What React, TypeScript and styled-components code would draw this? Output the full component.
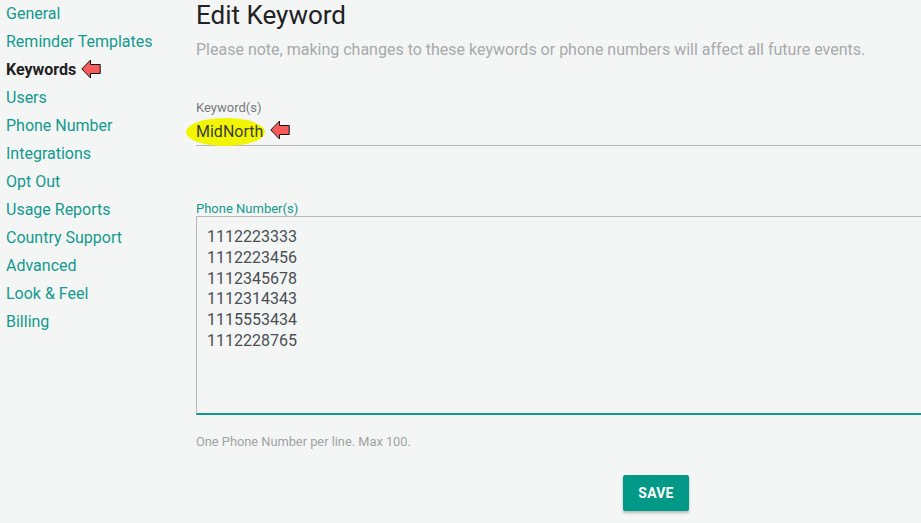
import React from "react";
import styled, { createGlobalStyle } from "styled-components";

const GlobalStyle = createGlobalStyle`
  html, body {
    margin: 0;
    padding: 0;
    background: #f4f6f5;
    overflow: hidden;
  }
  body {
    font-family: Roboto, "Liberation Sans", Arial, sans-serif;
  }
`;

const Page = styled.div`
  display: flex;
  width: 1200px;
  min-height: 523px;
`;

const Sidebar = styled.nav`
  width: 190px;
  padding-left: 6px;
  margin-top: -1px;
  display: flex;
  flex-direction: column;
`;

const NavItem = styled.a<{ $active?: boolean }>`
  display: flex;
  align-items: center;
  height: 28px;
  font-size: 16px;
  color: ${(p) => (p.$active ? "#222" : "#13998f")};
  font-weight: ${(p) => (p.$active ? 700 : 400)};
  text-decoration: none;
  cursor: pointer;
`;

const Main = styled.main`
  width: 920px;
  display: flex;
  flex-direction: column;
`;

const Title = styled.h1`
  margin: 0;
  font-size: 26px;
  line-height: 30px;
  font-weight: 400;
  color: #1f2124;
`;

const Note = styled.p`
  margin: 10px 0 0;
  font-size: 16px;
  line-height: 20px;
  color: #a8aaab;
`;

const Label = styled.label<{ $focused?: boolean }>`
  display: block;
  font-size: 13px;
  line-height: 14px;
  color: ${(p) => (p.$focused ? "#13998f" : "#777a7c")};
`;

const KeywordField = styled.div`
  margin-top: 41px;
  display: flex;
  flex-direction: column;
`;

const KeywordInput = styled.div`
  margin-top: 5px;
  height: 25px;
  border-bottom: 1px solid #b9bbbb;
  display: flex;
  align-items: flex-start;
  font-size: 16px;
  line-height: 24px;
  color: #3a3f3a;
`;

const Highlight = styled.span`
  background: #f2f500;
  border-radius: 50%;
  padding: 2px 2px 2px 10px;
  margin-left: -10px;
  margin-top: -2px;
`;

const PhoneField = styled.div`
  margin-top: 56px;
  display: flex;
  flex-direction: column;
`;

const Numbers = styled.textarea`
  height: 199px;
  box-sizing: border-box;
  border: 1px solid #b9bbbb;
  border-right: none;
  border-bottom: 2px solid #0f9a8c;
  background: transparent;
  resize: none;
  outline: none;
  padding: 10px 10px;
  font-family: Roboto, "Liberation Sans", Arial, sans-serif;
  font-size: 16px;
  line-height: 20.8px;
  color: #4a4e53;
`;

const Help = styled.div`
  margin-top: 19px;
  font-size: 12.8px;
  line-height: 16px;
  color: #a0a3a4;
`;

const Actions = styled.div`
  display: flex;
  justify-content: center;
  margin-top: 25px;
`;

const SaveButton = styled.button`
  width: 66px;
  height: 36px;
  border: none;
  border-radius: 2px;
  background: #009886;
  color: #fff;
  font-family: Roboto, "Liberation Sans", Arial, sans-serif;
  font-size: 14px;
  font-weight: 700;
  letter-spacing: 0.2px;
  box-shadow: 0 2px 3px rgba(0, 0, 0, 0.25);
  cursor: pointer;
`;

const ArrowMark = styled.svg`
  flex: none;
  width: 20px;
  height: 20px;
  margin-left: 5px;
`;

const Arrow: React.FC = () => (
  <ArrowMark viewBox="0 0 20 20">
    <polygon
      points="0.8,10 9.5,1 9.5,5.5 19.2,5.5 19.2,14.5 9.5,14.5 9.5,19"
      fill="#f75b5b"
      stroke="#111"
      strokeWidth="1"
    />
  </ArrowMark>
);

const navItems = [
  "General",
  "Reminder Templates",
  "Keywords",
  "Users",
  "Phone Number",
  "Integrations",
  "Opt Out",
  "Usage Reports",
  "Country Support",
  "Advanced",
  "Look & Feel",
  "Billing",
];

const phoneNumbers = [
  "1112223333",
  "1112223456",
  "1112345678",
  "1112314343",
  "1115553434",
  "1112228765",
].join("\n");

const App: React.FC = () => {
  return (
    <>
      <GlobalStyle />
      <Page>
        <Sidebar>
          {navItems.map((item) => (
            <NavItem key={item} $active={item === "Keywords"}>
              {item}
              {item === "Keywords" && <Arrow />}
            </NavItem>
          ))}
        </Sidebar>
        <Main>
          <Title>Edit Keyword</Title>
          <Note>
            Please note, making changes to these keywords or phone numbers will
            affect all future events.
          </Note>
          <KeywordField>
            <Label>Keyword(s)</Label>
            <KeywordInput>
              <Highlight>MidNorth</Highlight>
              <Arrow />
            </KeywordInput>
          </KeywordField>
          <PhoneField>
            <Label $focused>Phone Number(s)</Label>
            <Numbers defaultValue={phoneNumbers} />
          </PhoneField>
          <Help>One Phone Number per line. Max 100.</Help>
          <Actions>
            <SaveButton>SAVE</SaveButton>
          </Actions>
        </Main>
      </Page>
    </>
  );
};

export default App;
